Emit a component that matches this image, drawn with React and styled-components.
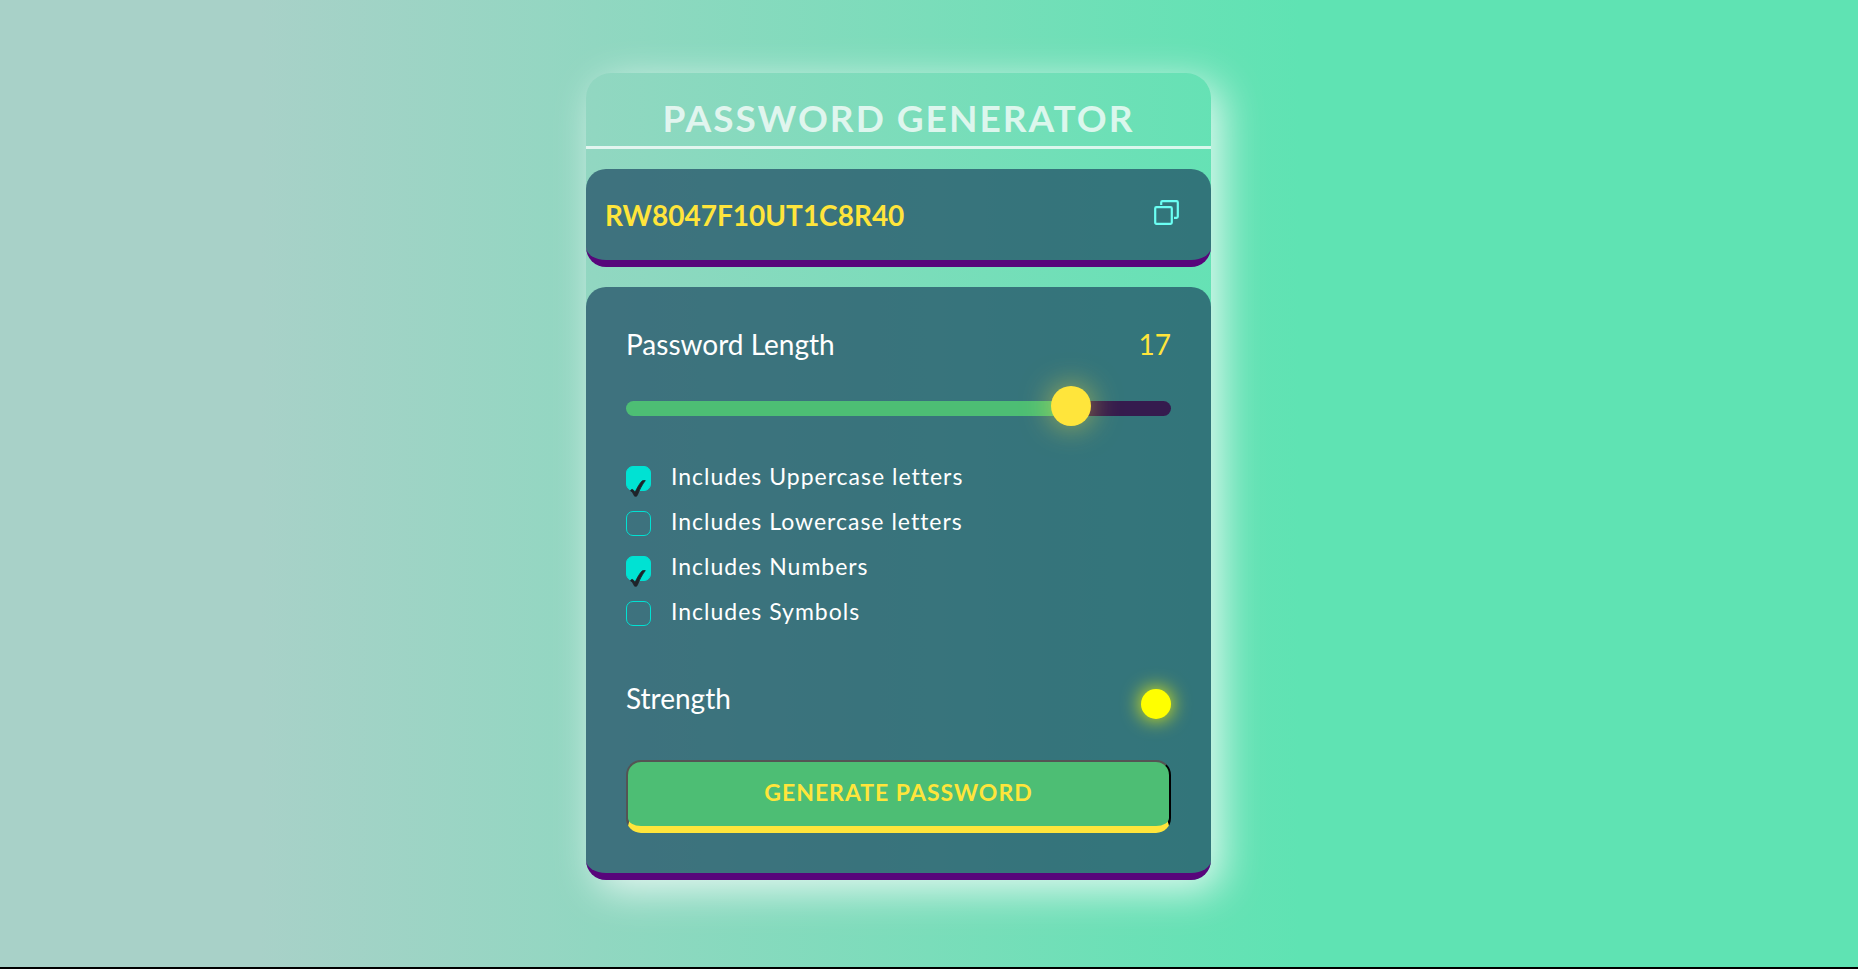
import React, { useState } from "react";
import styled, { createGlobalStyle } from "styled-components";

const GlobalStyle = createGlobalStyle`
  * { box-sizing: border-box; }
  html { background: #000; }
  body {
    margin: 0;
    color: #fff;
    font-family: Lato, "Open Sans", sans-serif;
  }
  button, input { font-family: inherit; }
`;

const Page = styled.main`
  min-height: calc(100vh - 2px);
  display: flex;
  align-items: center;
  justify-content: center;
  padding: 0 61px 14px 0;
  background: linear-gradient(90deg, #a8d1c8 14%, #7addba 50%, #5fe3b3 70%);
`;

const Card = styled.section`
  width: 625px;
  max-width: 100%;
  display: flex;
  flex-direction: column;
  gap: 20px;
  border-radius: 25px 25px 20px 20px;
  box-shadow: 10px 10px 40px rgba(255, 255, 255, 0.8);
`;

const Title = styled.h1`
  margin: 0;
  padding: 22px 0 6px;
  border-bottom: 3px solid rgba(255, 255, 255, 0.75);
  color: rgba(255, 255, 255, 0.75);
  font-size: 37px;
  line-height: 45px;
  font-weight: 700;
  letter-spacing: 2px;
  text-align: center;
  text-transform: uppercase;
`;

const Panel = styled.div`
  background: rgba(31, 75, 100, 0.72);
  border-bottom: 7px solid #58067b;
  border-radius: 20px;
`;

const Display = styled(Panel)`
  display: flex;
  align-items: center;
  justify-content: space-between;
  height: 98px;
  padding: 0 32px 0 19px;
`;

const Password = styled.output`
  color: #ffe53b;
  font-size: 28px;
  line-height: 34px;
  font-weight: 700;
`;

const CopyButton = styled.button`
  display: flex;
  padding: 0;
  margin-bottom: 4px;
  border: 0;
  background: none;
  color: #6bfff3;
  cursor: pointer;
`;

const Settings = styled(Panel)`
  padding: 40px;
`;

const Row = styled.div`
  display: flex;
  align-items: center;
  justify-content: space-between;
  font-size: 28px;
  line-height: 34px;
`;

const LengthValue = styled.span`
  color: #ffe53b;
`;

const Slider = styled.input`
  appearance: none;
  display: block;
  width: 100%;
  height: 15px;
  margin: 40px 0 50px;
  border-radius: 8px;
  background: linear-gradient(
    90deg,
    #4dbe74 ${(p) => p.$fill}%,
    #351b4e ${(p) => p.$fill}%
  );
  cursor: pointer;

  &::-webkit-slider-thumb {
    appearance: none;
    width: 40px;
    height: 40px;
    margin-top: -5px;
    border-radius: 50%;
    background: #ffe53b;
    box-shadow: 0 0 30px rgba(255, 229, 59, 0.6);
  }
`;

const Options = styled.div`
  display: flex;
  flex-direction: column;
  gap: 20px;
`;

const Option = styled.label`
  display: flex;
  gap: 20px;
  height: 25px;
  font-size: 23px;
  line-height: 21px;
  letter-spacing: 1px;
  cursor: pointer;
`;

const CheckBox = styled.span`
  position: relative;
  width: 25px;
  height: 25px;

  svg {
    position: absolute;
    top: 14px;
    left: 4px;
    pointer-events: none;
  }
`;

const CheckInput = styled.input`
  appearance: none;
  display: block;
  width: 25px;
  height: 25px;
  margin: 0;
  border: 1px solid #00e2d3;
  border-radius: 7px;
  cursor: pointer;

  &:checked {
    background: #00e2d3;
  }
`;

const StrengthRow = styled(Row)`
  margin: 55px 0 45px;
`;

const StrengthLight = styled.span`
  width: 30px;
  height: 30px;
  margin-top: 8px;
  margin-bottom: -4px;
  border-radius: 50%;
  background: #ff0;
  box-shadow: 0 0 20px #ff0;
`;

const GenerateButton = styled.button`
  display: block;
  width: 100%;
  height: 73px;
  padding: 0 0 4px;
  border: 2px outset #000;
  border-bottom: 7px solid #ffe53b;
  border-radius: 15px;
  background: #4dbe74;
  color: #ffe53b;
  font-size: 23px;
  line-height: 30px;
  font-weight: 700;
  letter-spacing: 1px;
  text-transform: uppercase;
  cursor: pointer;
`;

const CopyIcon = () => (
  <svg width="25" height="25" viewBox="0 0 25 25" fill="none" stroke="currentColor" strokeWidth="2.2" aria-hidden="true">
    <rect x="1.2" y="7.2" width="16.600" height="16.600" rx="1.200" />
    <path d="M7.200 5V2.400A1.200 1.200 0 0 1 8.400 1.200H22.600A1.200 1.200 0 0 1 23.800 2.400V16.600A1.200 1.200 0 0 1 22.600 17.800H20" />
  </svg>
);

const CheckMark = () => (
  <svg width="16" height="17" viewBox="0 0 16 17" fill="#1e2329" stroke="#1e2329" strokeWidth="0.8" strokeLinejoin="round" aria-hidden="true">
    <path d="M.6 11C.6 10 1.500 9.200 2.700 9.500 3.700 10 4.300 11.300 4.900 12.500 7.200 7.800 9.500 3.500 12.100.9 13.100.4 14.400.4 15.300.6 12 4.700 9.300 10.500 7.200 15.500 6.500 16.500 4.900 16.700 4.300 15.800 3.200 13.800 2.400 11.400.6 11Z" />
  </svg>
);

const OPTIONS = [
  ["upper", "Includes Uppercase letters"],
  ["lower", "Includes Lowercase letters"],
  ["numbers", "Includes Numbers"],
  ["symbols", "Includes Symbols"],
];

const CHARS = {
  upper: "ABCDEFGHIJKLMNOPQRSTUVWXYZ",
  lower: "abcdefghijklmnopqrstuvwxyz",
  numbers: "0123456789",
  symbols: "!@#$%^&*()-_=+[]{}<>?",
};

const MIN = 1;
const MAX = 20;

export default function App() {
  const [password, setPassword] = useState("RW8047F10UT1C8R40");
  const [length, setLength] = useState(17);
  const [checked, setChecked] = useState({ upper: true, numbers: true });

  const generate = () => {
    const pool = OPTIONS.filter(([k]) => checked[k]).map(([k]) => CHARS[k]).join("");
    if (!pool) return;
    setPassword(
      Array.from({ length }, () => pool[Math.floor(Math.random() * pool.length)]).join("")
    );
  };

  return (
    <>
      <GlobalStyle />
      <Page>
        <Card>
          <Title>Password Generator</Title>
          <Display>
            <Password>{password}</Password>
            <CopyButton
              type="button"
              aria-label="Copy password"
              onClick={() => navigator.clipboard?.writeText(password)}
            >
              <CopyIcon />
            </CopyButton>
          </Display>
          <Settings>
            <Row>
              <label htmlFor="length">Password Length</label>
              <LengthValue>{length}</LengthValue>
            </Row>
            <Slider
              id="length"
              type="range"
              min={MIN}
              max={MAX}
              value={length}
              $fill={Math.round(((length - MIN) / (MAX - MIN)) * 100)}
              onChange={(e) => setLength(Number(e.target.value))}
            />
            <Options>
              {OPTIONS.map(([key, text]) => (
                <Option key={key}>
                  <CheckBox>
                    <CheckInput
                      type="checkbox"
                      checked={!!checked[key]}
                      onChange={(e) => setChecked({ ...checked, [key]: e.target.checked })}
                    />
                    {checked[key] && <CheckMark />}
                  </CheckBox>
                  {text}
                </Option>
              ))}
            </Options>
            <StrengthRow>
              <span>Strength</span>
              <StrengthLight />
            </StrengthRow>
            <GenerateButton type="button" onClick={generate}>
              Generate Password
            </GenerateButton>
          </Settings>
        </Card>
      </Page>
    </>
  );
}
